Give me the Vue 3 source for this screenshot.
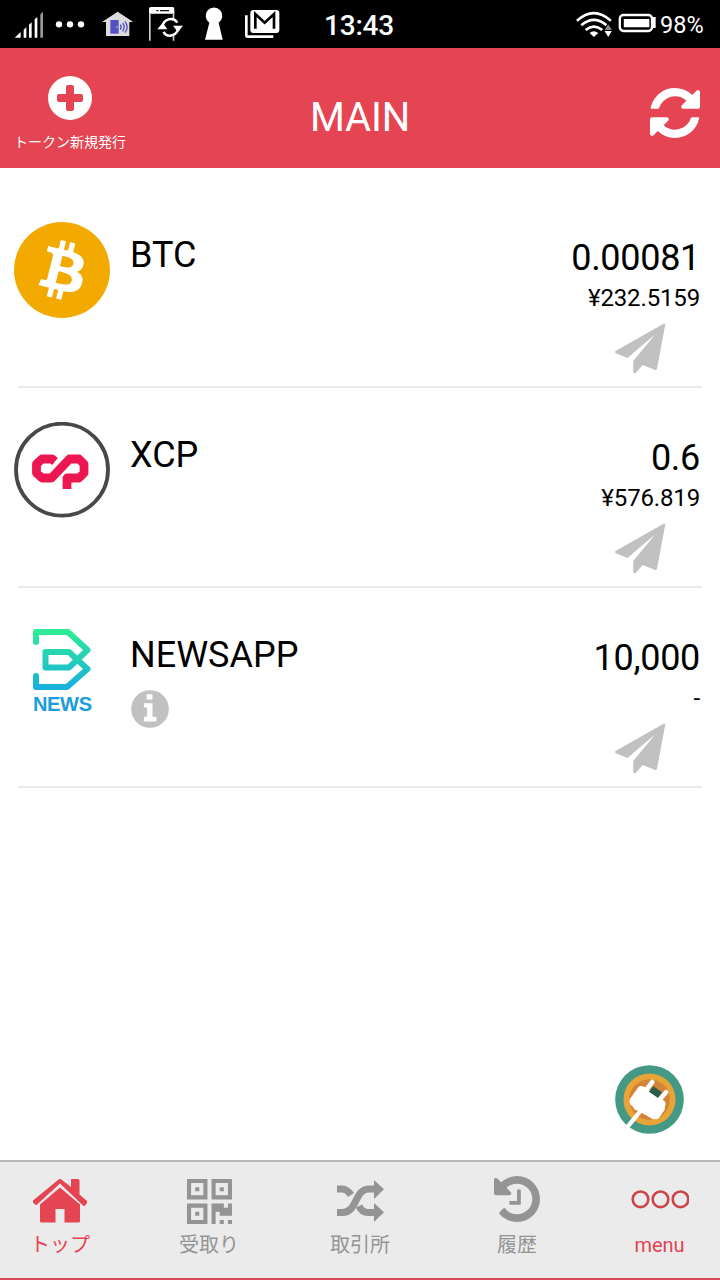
<template>
  <div class="wallet">
    <div class="status-bar">
      <svg class="status-icons" viewBox="0 0 900 144" width="300" height="48">
        <path fill="#fff" d="M44 113 62 96v17zM71 89l8-7v31h-8zM87 74l8-7v46h-8zM104 58l8-7v62h-8z" />
        <path fill="#999" d="m121 43 8-8v78h-8z" />
        <g fill="#fff">
          <circle cx="177" cy="73" r="9.5" />
          <circle cx="210" cy="73" r="9.5" />
          <circle cx="243" cy="73" r="9.5" />
        </g>
        <path fill="#dcdcdc" d="m353 35 47 31h-12v42h-70V66h-12z" />
        <path fill="#5450c4" d="M331 60h25v41h-25z" />
        <circle cx="351" cy="81" r="2.5" fill="#dcdcdc" />
        <path fill="none" stroke="#5450c4" stroke-width="4" d="M361 74q5 7 0 15M368 69q9 12 0 25M375 64q13 17 0 34" />
        <path fill="#fff" d="M447 26q0-5 5-5h66q5 0 5 5v15h-76z" />
        <path stroke="#111" stroke-width="4" d="M469 32h6M480 32h27" />
        <path fill="none" stroke="#ccc" stroke-width="5" d="M449.500 40v82M520.500 40v18M520.500 104v18" />
        <path fill="none" stroke="#fff" stroke-width="7" d="M488 80a24 24 0 0 1 44-12M534 82a24 24 0 0 1-44 14" />
        <path fill="#fff" d="m472 88 16-20 14 20zM519 77h30l-15 20z" />
        <path fill="#fff" d="M628 68a25 25 0 1 1 28 0l12 51h-53z" />
        <path fill="none" stroke="#fff" stroke-width="8" d="M739 46v60q0 4 4 4h77" />
        <rect x="751" y="30" width="87" height="69" rx="9" fill="#fff" />
        <path fill="none" stroke="#000" stroke-width="8" d="M766 86V42l28 26 28-26v44" />
      </svg>
      <span class="clock">13:43</span>
      <svg class="signal-icons" viewBox="825 0 250 144" width="83" height="48">
        <g fill="none" stroke="#fff" stroke-width="8">
          <path d="M831 62q50-46 102 0" />
          <path d="M844 76q38-33 76 0" />
          <path d="M857 90q25-20 50 0" />
        </g>
        <path fill="#fff" d="M869 99q13-11 26 0l-13 12z" />
        <path fill="#000" d="m925 68 15 20-15 27-14-27z" />
        <path fill="#888" d="m925 73 11 17h-22z" />
        <path fill="#fff" d="M914 93h22l-11 18z" />
        <rect x="960" y="45" width="97" height="48" rx="11" fill="none" stroke="#fff" stroke-width="7" />
        <path fill="#fff" d="M972 57h77v25h-77zM1059 51h9v33h-9z" />
      </svg>
      <span class="battery">98%</span>
    </div>

    <header class="header">
      <button class="issue" type="button">
        <svg viewBox="0 0 44 44" width="44" height="44">
          <circle cx="22" cy="22" r="22" fill="#fff" />
          <path fill="#e54453" d="M20 9h4q2 0 2 2v7h7q2 0 2 2v4q0 2-2 2h-7v7q0 2-2 2h-4q-2 0-2-2v-7h-7q-2 0-2-2v-4q0-2 2-2h7v-7q0-2 2-2z" />
        </svg>
        <span>トークン新規発行</span>
      </button>
      <h1>MAIN</h1>
      <button class="refresh" type="button">
        <svg viewBox="0 0 1536 1536" width="50" height="50">
          <path fill="#fff" d="M1511 928q0 5-1 7-64 268-268 434.5T764 1536q-146 0-282.5-55T238 1324l-129 129q-19 19-45 19t-45-19-19-45V960q0-26 19-45t45-19h448q26 0 45 19t19 45-19 45l-137 137q71 66 161 102t187 36q134 0 250-65t186-179q11-17 53-117 8-23 30-23h192q13 0 22.5 9.5t9.5 22.5zm25-800v448q0 26-19 45t-45 19h-448q-26 0-45-19t-19-45 19-45l138-138Q969 256 768 256q-134 0-250 65T332 500q-11 17-53 117-8 23-30 23H50q-13 0-22.5-9.5T18 608v-7q65-268 270-434.5T768 0q146 0 284 55.5T1297 212l130-129q19-19 45-19t45 19 19 45z" />
        </svg>
      </button>
    </header>

    <main class="token-list">
      <section v-for="token in tokens" :key="token.name" class="token">
        <svg v-if="token.name === 'BTC'" class="token-logo" viewBox="0 0 32 32">
          <circle cx="16" cy="16" r="16" fill="#f2a900" />
          <path fill="#fff" d="M23.189 14.02c.314-2.096-1.283-3.223-3.465-3.975l.708-2.84-1.728-.43-.69 2.765c-.454-.114-.92-.22-1.385-.326l.695-2.783L15.596 6l-.708 2.839c-.376-.086-.746-.17-1.104-.26l.002-.009-2.384-.595-.46 1.846s1.283.294 1.256.312c.7.175.826.638.805 1.006l-.806 3.235c.048.012.11.03.18.057l-.183-.045-1.13 4.532c-.086.212-.303.531-.793.41.018.025-1.256-.313-1.256-.313l-.858 1.978 2.25.561c.418.105.828.215 1.231.318l-.715 2.872 1.727.43.708-2.84c.472.127.93.245 1.378.357l-.706 2.828 1.728.43.715-2.866c2.948.558 5.164.333 6.097-2.333.752-2.146-.037-3.385-1.588-4.192 1.13-.26 1.98-1.003 2.207-2.538zm-3.95 5.538c-.533 2.147-4.148.986-5.32.695l.95-3.805c1.172.293 4.929.872 4.37 3.11zm.535-5.569c-.487 1.953-3.495.96-4.47.717l.86-3.45c.975.243 4.118.696 3.61 2.733z" />
        </svg>
        <svg v-else-if="token.name === 'XCP'" class="token-logo" viewBox="14 422 96 96">
          <circle cx="62" cy="469.7" r="46" fill="#fff" stroke="#484848" stroke-width="3.8" />
          <path fill="none" stroke="#ec1651" stroke-width="8.8" stroke-linejoin="round" d="M55 461.500l-3-2.500H42l-5.500 5v9l5.500 5h9.500l18-19H79l5 5v9l-5 5H67v11" />
        </svg>
        <svg v-else class="token-logo" viewBox="14 622 96 96">
          <defs>
            <linearGradient id="news-line" gradientUnits="userSpaceOnUse" x1="0" y1="628" x2="0" y2="690">
              <stop offset="0" stop-color="#30ef92" />
              <stop offset="1" stop-color="#17aee0" />
            </linearGradient>
          </defs>
          <path fill="none" stroke="url(#news-line)" stroke-width="6" stroke-linecap="round" stroke-linejoin="round" d="M36 642v-10h32l19.500 18L69 667.500H45.500v-15.500H69L87.500 669 67 687H36v-11" />
          <text x="33" y="711" textLength="59" class="news-text">NEWS</text>
        </svg>

        <div class="token-info">
          <h2>{{ token.name }}</h2>
          <svg v-if="token.hasInfo" class="info-icon" viewBox="393 237 115 115" width="38" height="38">
            <circle cx="450.500" cy="294.500" r="57" fill="#c1c1c1" />
            <path fill="#fff" d="M440 250h18v16h-18zM432 277h26v41h12v14h-38v-14h9v-28h-9z" />
          </svg>
        </div>

        <div class="token-balance">
          <span class="amount">{{ token.amount }}</span>
          <span class="fiat">{{ token.fiat }}</span>
          <button class="send" type="button">
            <svg viewBox="615 323 51 51" width="51" height="51">
              <path fill="#c1c1c1" d="M664 323.500 615.500 351q-1 1 0 2l12 5L655 334.500 633.200 361v11q1 2 2.500 1l7-8 12.500 5q1.500 0 1.800-1.500l8.200-43.500q0-1.500-1.200-1.500z" />
            </svg>
          </button>
        </div>
      </section>
    </main>

    <button class="connect" type="button">
      <svg viewBox="46 45 207 207" width="69" height="69">
        <circle cx="149.500" cy="148.500" r="103" fill="#449985" />
        <circle cx="149.500" cy="148.500" r="78" fill="#e8a437" />
        <circle cx="149.500" cy="148.500" r="61" fill="#d28537" />
        <path fill="none" stroke="#fff" stroke-width="13" d="M125 180 84 230" />
        <path fill="none" stroke="#fff" stroke-width="14" stroke-linecap="round" d="m141 118 17-22M181 148l18-21" />
        <path fill="#fff" d="M117 110q6-4 12-1l9 3 50 36 9 9q3 6-1 11l-1 11-17 25q-6 5-12 3-7 3-13-4-8-1-12-7-8-2-14-8-10 1-15-7-10-1-11-10-10-5-12-15-2-8 6-15z" />
        <path fill="#2b5d4c" d="m161 109 26 18-12 17-27-19z" />
      </svg>
    </button>

    <nav class="tabs">
      <a v-for="tab in tabs" :key="tab.id" class="tab" :class="{ active: tab.active }">
        <svg v-if="tab.id === 'home'" viewBox="33 1176 54 48" width="54" height="48">
          <path fill="currentColor" d="M58 1180q2-2 4 0l9 7v-7q0-1 1-1h6q1.500 0 1.500 1.500v14l7.500 6.500q1 1 0 2l-2 2.500q-1 1-2 0L60 1183.500 37 1204.500q-1 1-2 0l-2-2q-1-1 0-2z" />
          <path fill="currentColor" d="m60 1187.500 20 17V1221q0 1.500-1.500 1.500H64.500V1209H55.500v13.500H41.500q-1.500 0-1.500-1.500v-16.500z" />
        </svg>
        <svg v-else-if="tab.id === 'receive'" class="qr" viewBox="0 0 1408 1408" width="45" height="45">
          <path fill="currentColor" fill-rule="evenodd" d="M0 0h640v640H0zM128 128v384h384V128zM256 256h128v128H256zM768 0h640v640H768zM896 128v384h384V128zM1024 256h128v128h-128zM0 768h640v640H0zM128 896v384h384V896zM256 1024h128v128H256zM768 768h384v128h128V768h128v384h-384v-128H896v384H768zM1024 1280h128v128h-128zM1280 1280h128v128h-128z" />
        </svg>
        <svg v-else-if="tab.id === 'exchange'" viewBox="337 1176 48 48" width="48" height="48">
          <g fill="none" stroke="currentColor" stroke-width="7.200">
            <path d="M338 1212.500h5c16 0 12-23.500 27-23.500h6" />
            <path d="M338 1189h5q5 0 9 6" />
            <path d="M360 1206q3 6.500 9 6.500h7" />
          </g>
          <path fill="currentColor" d="m375 1180 10 9.300-10 9.700zM375 1203l10 9.300-10 9.700z" />
        </svg>
        <svg v-else-if="tab.id === 'history'" class="history" viewBox="0 0 1536 1536" width="46" height="46">
          <path fill="currentColor" d="M1536 768q0 156-61 298t-164 245-245 164-298 61q-172 0-327-72.500T177 1259q-7-10-6.500-22.500t8.500-20.500l137-138q10-9 25-9 16 2 23 12 73 95 179 147t225 52q104 0 198.500-40.500T1130 1130t109.500-163.500T1280 768t-40.500-198.500T1130 406 966.500 296.500 768 256q-98 0-188 35.500T420 393l137 138q31 30 14 69-17 40-59 40H64q-26 0-45-19T0 576V128q0-42 40-59 39-17 69 14l130 129q107-101 244.500-156.500T768 0q156 0 298 61t245 164 164 245 61 298zM896 480v448q0 14-9 23t-23 9H544q-14 0-23-9t-9-23v-64q0-14 9-23t23-9h224V480q0-14 9-23t23-9h64q14 0 23 9t9 23z" />
        </svg>
        <svg v-else viewBox="631 1176 58 48" width="58" height="48">
          <g fill="none" stroke="#cb454b" stroke-width="2.600">
            <circle cx="640.500" cy="1199.300" r="7.800" />
            <circle cx="660.500" cy="1199.300" r="7.800" />
            <circle cx="680.500" cy="1199.300" r="7.800" />
          </g>
        </svg>
        <span>{{ tab.label }}</span>
      </a>
    </nav>
  </div>
</template>

<script setup>
import { ref } from 'vue'

const tokens = ref([
  { name: 'BTC', amount: '0.00081', fiat: '¥232.5159' },
  { name: 'XCP', amount: '0.6', fiat: '¥576.819' },
  { name: 'NEWSAPP', amount: '10,000', fiat: '-', hasInfo: true }
])

const tabs = [
  { id: 'home', label: 'トップ', active: true },
  { id: 'receive', label: '受取り' },
  { id: 'exchange', label: '取引所' },
  { id: 'history', label: '履歴' },
  { id: 'menu', label: 'menu', active: true }
]
</script>

<style>
body {
  margin: 0;
  background: #ffffff;
}
</style>

<style scoped>
.wallet {
  position: relative;
  display: flex;
  flex-direction: column;
  width: 720px;
  height: 1280px;
  overflow: hidden;
  background: #ffffff;
  color: #000000;
  font-family: Roboto, "Noto Sans CJK JP", sans-serif;
}

button {
  padding: 0;
  border: 0;
  background: none;
  font: inherit;
  cursor: pointer;
}

svg {
  display: block;
  flex-shrink: 0;
}

.status-bar {
  display: flex;
  align-items: center;
  height: 48px;
  background: #000000;
  color: #ffffff;
}

.clock {
  width: 251px;
  padding: 3px 0 0 24px;
  font-size: 28px;
  font-weight: 500;
  letter-spacing: -0.2px;
}

.battery {
  padding: 2px 0 0 2px;
  font-size: 23.5px;
}

.header {
  display: grid;
  grid-template-columns: 140px 1fr 140px;
  height: 120px;
  background: #e54453;
  color: #ffffff;
}

.issue {
  display: flex;
  flex-direction: column;
  align-items: center;
  padding-top: 28px;
  color: #ffffff;
  font-size: 14px;
  line-height: 20px;
  white-space: nowrap;
}

.issue span {
  margin-top: 12px;
}

.header h1 {
  margin: 0;
  padding-top: 10px;
  font-size: 40px;
  font-weight: 400;
  letter-spacing: -0.2px;
  line-height: 120px;
  height: 110px;
  text-align: center;
}

.refresh {
  display: flex;
  align-items: center;
  justify-content: flex-end;
  padding: 10px 20px 0 0;
}

.token-list {
  flex: 1;
  padding-top: 20px;
}

.token {
  display: grid;
  grid-template-columns: 96px 1fr auto;
  column-gap: 20px;
  height: 198px;
  padding: 0 20px 2px 14px;
  background: linear-gradient(#e9e9e9, #e9e9e9) 18px 100% / 684px 2px no-repeat;
}

.token-logo {
  width: 96px;
  height: 96px;
  margin-top: 34px;
}

.news-text {
  fill: #1a9ddd;
  font: bold 20px "Liberation Sans", sans-serif;
}

.token-info {
  padding-top: 45px;
}

.token-info h2 {
  margin: 0;
  font-size: 36px;
  font-weight: 400;
  line-height: 44px;
}

.info-icon {
  margin: 13px 0 0 1px;
}

.token-balance {
  display: flex;
  flex-direction: column;
  align-items: flex-end;
  padding-top: 48px;
}

.amount {
  font-size: 36px;
  letter-spacing: -0.3px;
  line-height: 44px;
}

.fiat {
  font-size: 24px;
  letter-spacing: -0.15px;
  line-height: 36px;
}

.send {
  margin: 7px 34px 0 0;
}

.connect {
  position: absolute;
  right: 36px;
  bottom: 146px;
}

.tabs {
  display: grid;
  grid-template-columns: 120px 178px 124px 190px 95px;
  box-sizing: border-box;
  height: 120px;
  border-top: 2px solid #b9b9b9;
  border-bottom: 2px solid #d64b5b;
  background: #ebebeb;
}

.tab {
  display: flex;
  flex-direction: column;
  align-items: center;
  padding-top: 14px;
  color: #949494;
  font-size: 20px;
}

.tab.active {
  color: #e54453;
}

.tab span {
  margin-top: 7px;
  line-height: 28px;
}

.qr {
  margin: 3px 0 0;
}

.history {
  margin-bottom: 2px;
}
</style>
